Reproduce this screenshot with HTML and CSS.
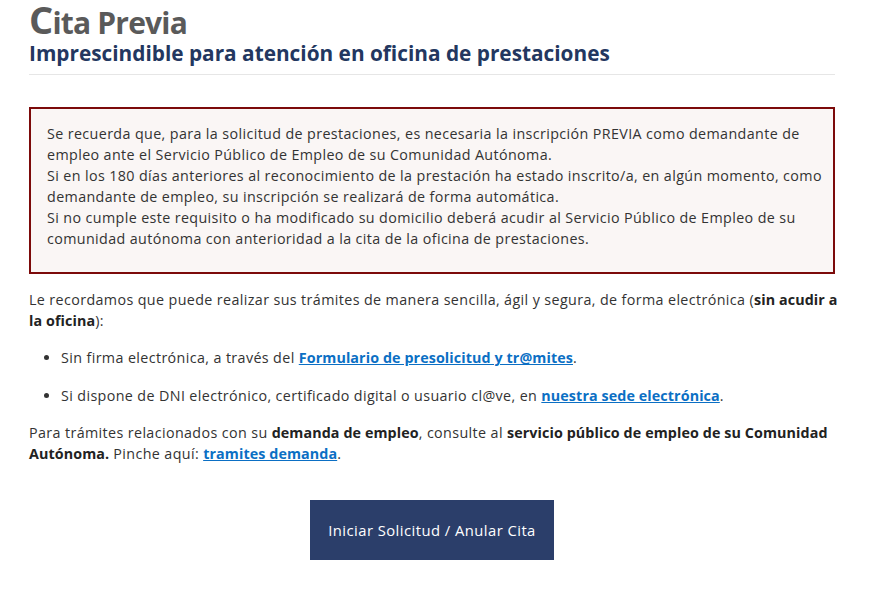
FILE: index.html
```html
<!DOCTYPE html>
<html lang="es">
<head>
<meta charset="utf-8">
<title>Cita Previa</title>
<link rel="stylesheet" href="styles.css">
</head>
<body>
<main class="page">
  <header class="page-head">
    <h1 class="title">Cita Previa</h1>
    <h2 class="subtitle">Imprescindible para atención en oficina de prestaciones</h2>
  </header>

  <section class="notice">
    <p>Se recuerda que, para la solicitud de prestaciones, es necesaria la inscripción PREVIA como demandante de<br>
    empleo ante el Servicio Público de Empleo de su Comunidad Autónoma.<br>
    Si en los 180 días anteriores al reconocimiento de la prestación ha estado inscrito/a, en algún momento, como<br>
    demandante de empleo, su inscripción se realizará de forma automática.<br>
    Si no cumple este requisito o ha modificado su domicilio deberá acudir al Servicio Público de Empleo de su<br>
    comunidad autónoma con anterioridad a la cita de la oficina de prestaciones.</p>
  </section>

  <p class="text">Le recordamos que puede realizar sus trámites de manera sencilla, ágil y segura, de forma electrónica (<strong>sin acudir a<br>la oficina</strong>):</p>

  <ul class="list">
    <li>Sin firma electrónica, a través del <a href="#">Formulario de presolicitud y tr@mites</a>.</li>
    <li>Si dispone de DNI electrónico, certificado digital o usuario cl@ve, en <a href="#">nuestra sede electrónica</a>.</li>
  </ul>

  <p class="text">Para trámites relacionados con su <strong>demanda de empleo</strong>, consulte al <strong>servicio público de empleo de su Comunidad<br>Autónoma.</strong> Pinche aquí: <a href="#">tramites demanda</a>.</p>

  <div class="actions">
    <button class="btn" type="button">Iniciar Solicitud / Anular Cita</button>
  </div>
</main>
</body>
</html>
```

FILE: styles.css
```css
html, body {
  margin: 0;
  padding: 0;
  background: #ffffff;
}

body {
  font-family: "Open Sans", "Noto Sans", "Liberation Sans", sans-serif;
  color: #333333;
}

.page {
  width: 806px;
  margin-left: 29px;
}

.page-head {
  border-bottom: 1px solid #e6e6e6;
  padding-bottom: 8px;
}

.title {
  margin: 0;
  padding-top: 2px;
  font-family: "Open Sans", sans-serif;
  font-weight: 700;
  font-size: 30px;
  line-height: 34px;
  letter-spacing: -0.8px;
  color: #5a5a5a;
}

.title::first-letter {
  font-size: 38px;
}

.subtitle {
  margin: 0;
  font-family: "Open Sans", sans-serif;
  font-weight: 700;
  font-size: 20.8px;
  line-height: 26px;
  color: #233760;
}

.notice {
  margin-top: 32px;
  border: 2px solid #7c0a0a;
  background: #faf6f5;
  padding: 14px 16px 23px;
}

.notice p,
.text,
.list {
  font-size: 14.3px;
  line-height: 21px;
  letter-spacing: 0.38px;
  white-space: nowrap;
}

.notice p {
  margin: 0;
  color: #333333;
}

.text {
  margin: 15px 0 0;
}

.text strong {
  font-weight: 700;
  color: #222222;
  letter-spacing: 0.1px;
}

.list {
  margin: 16px 0 0;
  padding-left: 32px;
}

.list li {
  margin-bottom: 17px;
}

.list li:last-child {
  margin-bottom: 0;
}

.list + .text {
  margin-top: 16px;
}

a {
  color: #0b6fc4;
  font-weight: 700;
  letter-spacing: 0.1px;
  text-decoration: underline;
}

.actions {
  display: flex;
  justify-content: center;
  margin-top: 36px;
}

.btn {
  width: 244px;
  height: 60px;
  border: none;
  background: #2b3e6a;
  color: #ffffff;
  font-family: "Open Sans", sans-serif;
  font-size: 14.8px;
  letter-spacing: 0.45px;
  cursor: pointer;
}
```
